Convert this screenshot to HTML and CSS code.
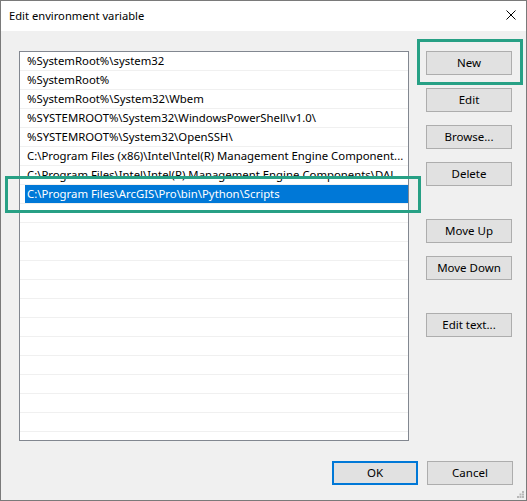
FILE: index.html
```html
<!DOCTYPE html>
<html lang="en">
<head>
    <meta charset="UTF-8">
    <title>Edit environment variable</title>
    <link rel="stylesheet" href="styles.css">
</head>
<body>
    <div class="window">
        <div class="titlebar">
            <span class="title">Edit environment variable</span>
            <svg class="close" width="10" height="10" viewBox="0 0 10 10">
                <path d="M0.5 0.5 L9.5 9.5 M9.5 0.5 L0.5 9.5" stroke="#000" stroke-width="1" fill="none"/>
            </svg>
        </div>

        <div class="client">
            <div class="main">
                <div class="list">
                    <div class="row"><div class="cell">%SystemRoot%\system32</div></div>
                    <div class="row"><div class="cell">%SystemRoot%</div></div>
                    <div class="row"><div class="cell">%SystemRoot%\System32\Wbem</div></div>
                    <div class="row"><div class="cell">%SYSTEMROOT%\System32\WindowsPowerShell\v1.0\</div></div>
                    <div class="row"><div class="cell">%SYSTEMROOT%\System32\OpenSSH\</div></div>
                    <div class="row"><div class="cell">C:\Program Files (x86)\Intel\Intel(R) Management Engine Component...</div></div>
                    <div class="row"><div class="cell">C:\Program Files\Intel\Intel(R) Management Engine Components\DAL</div></div>
                    <div class="row"><div class="cell selected">C:\Program Files\ArcGIS\Pro\bin\Python\Scripts</div></div>
                    <div class="row"><div class="cell"></div></div>
                    <div class="row"><div class="cell"></div></div>
                    <div class="row"><div class="cell"></div></div>
                    <div class="row"><div class="cell"></div></div>
                    <div class="row"><div class="cell"></div></div>
                    <div class="row"><div class="cell"></div></div>
                    <div class="row"><div class="cell"></div></div>
                    <div class="row"><div class="cell"></div></div>
                    <div class="row"><div class="cell"></div></div>
                    <div class="row"><div class="cell"></div></div>
                    <div class="row"><div class="cell"></div></div>
                    <div class="row"><div class="cell"></div></div>
                    <div class="row"><div class="cell"></div></div>
                </div>

                <div class="side">
                    <button class="btn">New</button>
                    <button class="btn">Edit</button>
                    <button class="btn">Browse...</button>
                    <button class="btn">Delete</button>
                    <button class="btn group">Move Up</button>
                    <button class="btn">Move Down</button>
                    <button class="btn group">Edit text...</button>
                </div>
            </div>

            <div class="footer">
                <button class="btn default">OK</button>
                <button class="btn">Cancel</button>
            </div>
        </div>

        <!-- highlight boxes drawn on top -->
        <div class="mark mark-new"></div>
        <div class="mark mark-row"></div>

        <svg class="grip" width="7" height="7" viewBox="0 0 7 7">
            <rect x="5" y="0" width="2" height="2" fill="#b8b8b8"/>
            <rect x="2.5" y="2.5" width="2" height="2" fill="#b8b8b8"/>
            <rect x="5" y="2.5" width="2" height="2" fill="#b8b8b8"/>
            <rect x="0" y="5" width="2" height="2" fill="#b8b8b8"/>
            <rect x="2.5" y="5" width="2" height="2" fill="#b8b8b8"/>
            <rect x="5" y="5" width="2" height="2" fill="#b8b8b8"/>
        </svg>
    </div>
</body>
</html>
```

FILE: styles.css
```css
body {
    margin: 0;
    font-family: "Noto Sans", "Open Sans", sans-serif;
    font-size: 11px;
    color: #000;
}

.window {
    position: relative;
    width: 527px;
    height: 501px;
    box-sizing: border-box;
    border: 1px solid #7a7a7a;
    background: #f0f0f0;
    display: flex;
    flex-direction: column;
    overflow: hidden;
}

.titlebar {
    height: 30px;
    background: #fff;
    display: flex;
    align-items: center;
    padding: 0 10px 0 8px;
    flex-shrink: 0;
}

.title {
    flex: 1;
    font-size: 11.2px;
    padding-bottom: 1px;
}

.close {
    display: block;
    margin-bottom: 2px;
}

.client {
    padding: 20px 13px 0 18px;
}

.main {
    display: flex;
    gap: 17px;
}

.list {
    width: 390px;
    height: 390px;
    box-sizing: border-box;
    border: 1px solid #828790;
    background: #fff;
    overflow: hidden;
}

.row {
    height: 18px;
    border-bottom: 1px solid #f0f0f0;
}

.cell {
    height: 18px;
    line-height: 18px;
    margin-left: 5px;
    padding-left: 2px;
    font-size: 11.35px;
    white-space: nowrap;
    overflow: hidden;
}

.cell.selected {
    background: #0078d7;
    color: #fff;
}

.side {
    display: flex;
    flex-direction: column;
    gap: 13px;
}

.btn {
    width: 86px;
    height: 24px;
    box-sizing: border-box;
    border: 1px solid #adadad;
    background: #e1e1e1;
    font-family: inherit;
    font-size: 11.5px;
    color: #000;
    padding: 0 0 1px;
}

.btn.group {
    margin-top: 20px;
}

.btn.default {
    border: 2px solid #0078d7;
}

.footer {
    display: flex;
    justify-content: flex-end;
    gap: 9px;
    margin-top: 20px;
}

.mark {
    position: absolute;
    border: 3px solid #27a085;
    box-sizing: border-box;
}

.mark-new {
    left: 416px;
    top: 38px;
    width: 106px;
    height: 46px;
}

.mark-row {
    left: 4px;
    top: 175px;
    width: 416px;
    height: 37px;
}

.grip {
    position: absolute;
    right: 2px;
    bottom: 2px;
}
```
